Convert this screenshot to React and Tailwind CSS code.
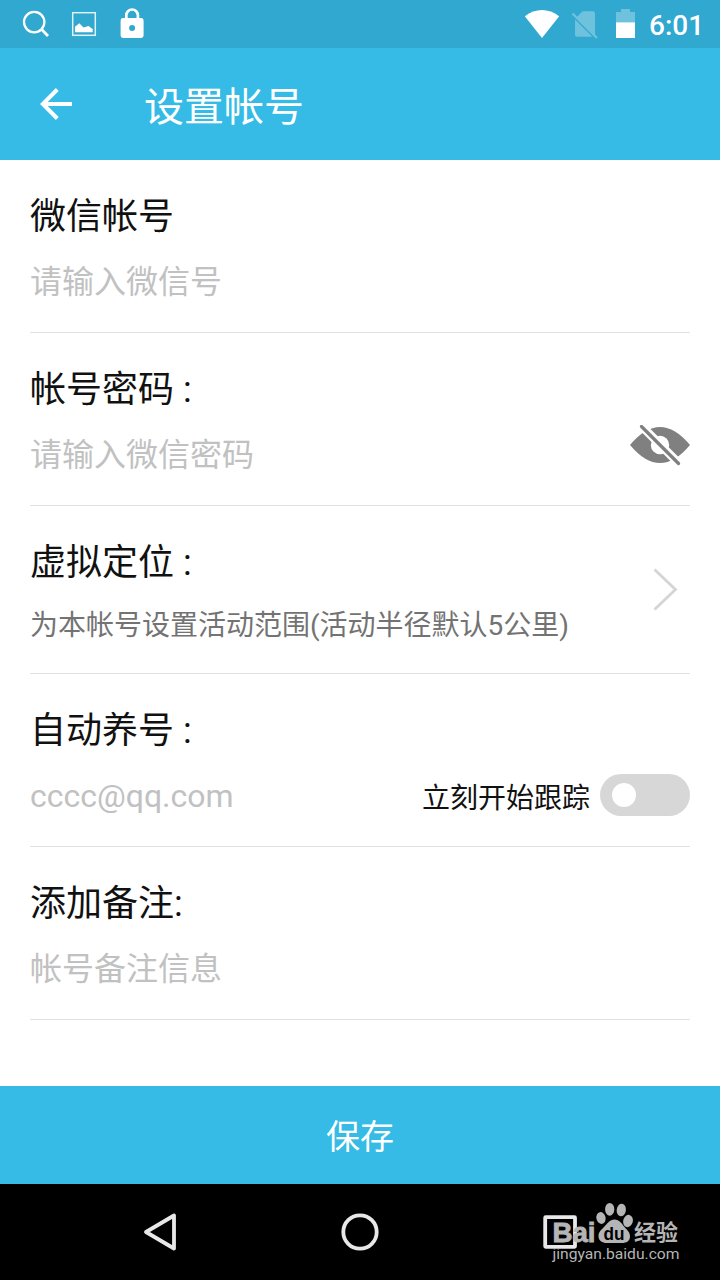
const fields = [
  { id: 'account', label: '微信帐号', hint: '请输入微信号' },
  { id: 'password', label: '帐号密码 :', hint: '请输入微信密码', extra: 'eye' },
  { id: 'location', label: '虚拟定位 :', text: '为本帐号设置活动范围(活动半径默认5公里)', extra: 'chevron' },
  { id: 'auto', label: '自动养号 :', hint: 'cccc@qq.com', extra: 'switch' },
  { id: 'remark', label: '添加备注:', hint: '帐号备注信息' },
];

function StatusBar() {
  return (
    <div className="flex h-12 shrink-0 items-center justify-between bg-[#30a8cf] text-white">
      <svg width="160" height="48" viewBox="0 0 160 48" fill="none">
        <circle cx="34.2" cy="22.1" r="10.2" stroke="white" strokeWidth="2.3" />
        <path d="M41.5 29.3L48 36" stroke="white" strokeWidth="2.8" />
        <rect x="72.7" y="12.7" width="22.6" height="22.6" stroke="white" strokeOpacity="0.85" strokeWidth="1.5" />
        <path d="M75 32.3v-5.6l4.3-3.5 4.2 4.4 5-1.7 4.2 3v3.4z" fill="white" />
        <path d="M126.3 18.5v-3.2a5.8 5.8 0 0 1 11.6 0v3.2" stroke="white" strokeWidth="2.7" />
        <path fillRule="evenodd" d="M123 18h18.2a2.4 2.4 0 0 1 2.4 2.4v15.2a2.4 2.4 0 0 1-2.4 2.4H123a2.4 2.4 0 0 1-2.4-2.4V20.4A2.4 2.4 0 0 1 123 18zM132.1 25.1a3 3 0 1 0 0 6 3 3 0 0 0 0-6z" fill="white" />
      </svg>
      <div className="flex items-center pr-[17px]">
        <svg width="124" height="48" viewBox="520 0 124 48" fill="none">
          <path d="M542 38L524.8 16.2Q533 10 542 10t17.2 6.2z" fill="white" />
          <path d="M577.2 16.8l5.3-5.6H593q2 0 2 2v21.2zM575 19.5l17.5 17.3H577q-2 0-2-2z" fill="white" fillOpacity="0.3" />
          <path d="M572.5 13.5L597 38" stroke="white" strokeOpacity="0.3" strokeWidth="2.4" />
          <path d="M616 22.3V12h5V9h9v3h5v10.3z" fill="white" fillOpacity="0.3" />
          <path d="M616 22.3h19V38h-19z" fill="white" />
        </svg>
        <span className="ml-[5px] mt-[3px] w-[54px] whitespace-nowrap text-[28px] font-medium leading-8">6:01</span>
      </div>
    </div>
  );
}

function EyeOff() {
  return (
    <svg width="60" height="42" viewBox="630 425 60 42" fill="none">
      <path d="M630 445Q645 427 660 427t30 18Q675 463 660 463t-30-18z" fill="#808080" />
      <circle cx="660" cy="445" r="9.2" fill="white" />
      <path d="M638 422.5L682 466.5" stroke="white" strokeWidth="8.5" />
      <path d="M641.5 426.5L678.5 463.5" stroke="#808080" strokeWidth="3.2" strokeLinecap="round" />
    </svg>
  );
}

function Extra({ type }) {
  if (type === 'eye') {
    return <div className="mt-[92px]"><EyeOff /></div>;
  }
  if (type === 'chevron') {
    return (
      <svg className="mt-[61px] mr-3" width="26" height="44" viewBox="0 0 26 44" fill="none">
        <path d="M2.5 2.5L23.5 22.5L2.5 42.5" stroke="#d5d5d5" strokeWidth="2.8" />
      </svg>
    );
  }
  if (type === 'switch') {
    return (
      <div className="mt-[100px] flex h-[42px] items-center">
        <span className="mr-[10px] pt-2 text-[28px] leading-[42px] text-[#111]">立刻开始跟踪</span>
        <span className="flex h-[42px] w-[90px] items-center rounded-full bg-[#d7d7d7] pl-3">
          <span className="h-6 w-6 rounded-full bg-white" />
        </span>
      </div>
    );
  }
  return null;
}

function Field({ field }) {
  return (
    <div className={`flex items-start justify-between border-b border-[#e1e1e1] ${field.text ? 'h-[168px]' : 'h-[173px]'}`}>
      <div className="whitespace-nowrap pt-8">
        <h2 className="text-[36px] leading-[50px] text-[#111]">{field.label}</h2>
        {field.text ? (
          <p className="mt-[18px] text-[28px] leading-10 text-[#737373]">{field.text}</p>
        ) : (
          <p className="mt-[17px] text-[32px] leading-[46px] text-[#c1c1c1]">{field.hint}</p>
        )}
      </div>
      <Extra type={field.extra} />
    </div>
  );
}

function Watermark() {
  return (
    <svg className="absolute left-[540px] top-[16px]" width="150" height="66" viewBox="540 1200 150 66">
      <g fill="#b5b5b5">
        <text x="552.5" y="1241.5" fontSize="28" fontWeight="700" textLength="43" lengthAdjust="spacingAndGlyphs" stroke="#b5b5b5" strokeWidth="0.9" fontFamily="'Liberation Sans', sans-serif">Bai</text>
        <ellipse cx="601" cy="1218" rx="4.6" ry="6" transform="rotate(-12 601 1218)" />
        <ellipse cx="609.7" cy="1209.3" rx="4.6" ry="6.4" />
        <ellipse cx="621.3" cy="1210" rx="4.6" ry="6.4" transform="rotate(8 621.3 1210)" />
        <ellipse cx="628" cy="1221" rx="4.8" ry="6.2" transform="rotate(14 628 1221)" />
        <path d="M614.5 1219.5c5 0 7 4 10 7.5 3.500 4 5.500 5.500 5.500 9.500 0 4.500-3.500 6.500-8 6.500h-15c-5 0-8.500-2.500-8.500-7 0-4 2.500-6 6-9.500 3-3 5-7 10-7z" />
        <text x="634" y="1240" fontSize="22" fontWeight="700" textLength="44" fontFamily="'Noto Sans CJK SC', sans-serif">经验</text>
        <text x="552.5" y="1259" fontSize="15" textLength="127" lengthAdjust="spacingAndGlyphs" fontFamily="Roboto, sans-serif">jingyan.baidu.com</text>
      </g>
      <text x="603.5" y="1239.500" fontSize="19" fontWeight="700" fill="black" textLength="21" lengthAdjust="spacingAndGlyphs" fontFamily="'Liberation Sans', sans-serif">du</text>
    </svg>
  );
}

function NavBar() {
  return (
    <div className="relative flex h-24 shrink-0 items-center bg-black">
      <svg width="720" height="96" viewBox="0 1184 720 96" fill="none" stroke="#e8e8e8" strokeWidth="3.8" strokeLinejoin="round">
        <path d="M146 1232L174 1215.5V1248.5z" />
        <circle cx="360" cy="1232" r="16.7" />
        <rect x="545.2" y="1217.2" width="29.8" height="29.6" rx="0.5" />
      </svg>
      <Watermark />
    </div>
  );
}

export default function App() {
  return (
    <div className="flex h-[1280px] w-[720px] flex-col overflow-hidden bg-white font-['Roboto','Noto_Sans_CJK_SC',sans-serif]">
      <StatusBar />
      <header className="flex h-28 shrink-0 items-center bg-[#35bbe5] pl-10 text-white">
        <svg width="32" height="32" viewBox="0 0 32 32" fill="none" stroke="white" strokeWidth="4">
          <path d="M32 16H3M17.3 1.5L2.8 16l14.5 14.5" />
        </svg>
        <h1 className="ml-[72px] pt-2 text-[40px] leading-[56px]">设置帐号</h1>
      </header>
      <main className="flex-1 px-[30px]">
        {fields.map((field) => (
          <Field key={field.id} field={field} />
        ))}
      </main>
      <button className="h-[98px] shrink-0 bg-[#35bbe5] pt-1 text-[34px] text-white">保存</button>
      <NavBar />
    </div>
  );
}
